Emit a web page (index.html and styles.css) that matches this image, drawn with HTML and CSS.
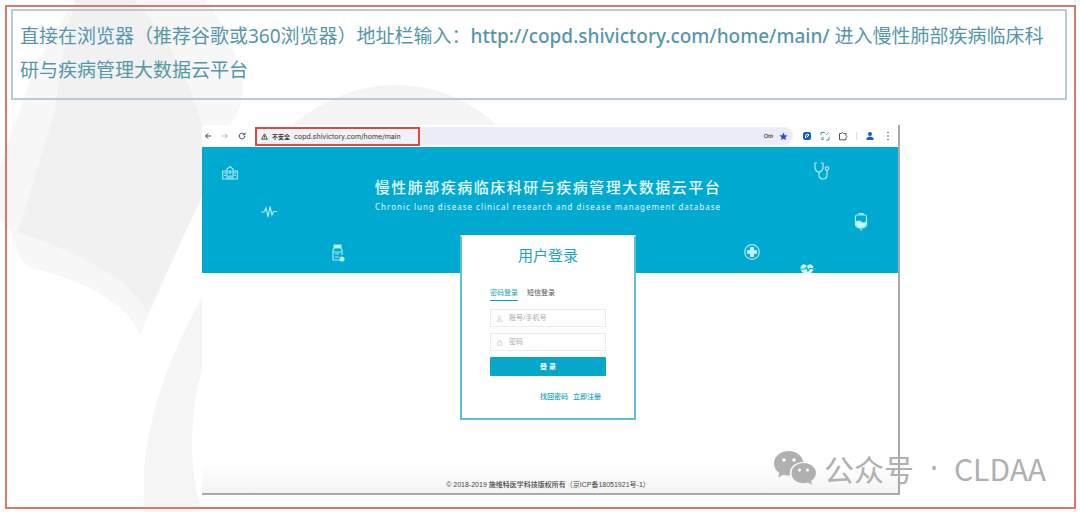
FILE: index.html
```html
<!DOCTYPE html>
<html lang="zh-CN">
<head>
<meta charset="utf-8">
<title>慢性肺部疾病临床科研与疾病管理大数据云平台</title>
<link rel="stylesheet" href="styles.css">
</head>
<body>
<svg class="backdrop" viewBox="0 0 1080 512" preserveAspectRatio="xMinYMin slice" aria-hidden="true">
  <path fill="#f7f7f7" d="M75 0H205Q236 40 243 85Q243 108 230 125L200 197L140 335Q130 308 88 287Q60 275 32 268Q14 258 14 235L0 220V165Q8 140 20 110Q34 60 75 0Z"/>
  <path fill="#f1f1f1" d="M75 0H135Q180 50 202 125V197L148 312Q135 290 112 275Q62 245 18 233Q40 160 55 110Q62 50 75 0Z"/>
  <path fill="#f4f4f4" d="M288 128Q340 85 395 85Q455 85 500 128V148H288Z"/>
  <path fill="#f5f5f5" d="M203 295Q150 390 144 470V512H201Q182 440 203 365Z"/>
</svg>
<main class="frame">
  <p class="notice">直接在浏览器（推荐谷歌或360浏览器）地址栏输入：<a href="#">http://copd.shivictory.com/home/main/</a> 进入慢性肺部疾病临床科研与疾病管理大数据云平台</p>

  <section class="window">
    <div class="toolbar">
      <button class="tool" aria-label="后退"><svg viewBox="0 0 8 8"><path d="M7 4H1.5M4 1.5L1.5 4L4 6.5" stroke="#444"/></svg></button>
      <button class="tool" aria-label="前进"><svg viewBox="0 0 8 8"><path d="M1 4H6.5M4 1.5L6.5 4L4 6.5" stroke="#bbb"/></svg></button>
      <button class="tool" aria-label="刷新"><svg viewBox="0 0 8 8"><path d="M6.8 4A2.8 2.8 0 1 1 5.8 1.9M7 .7V2.8H4.8" stroke="#444"/></svg></button>
      <div class="address">
        <div class="address-main">
          <svg class="warn" viewBox="0 0 8 8"><path d="M4 1L7.3 7H.7ZM4 3V5M4 5.5V6.2" stroke="#333"/></svg>
          <span class="insecure">不安全</span>
          <span class="url">copd.shivictory.com/home/main</span>
        </div>
        <svg class="key" viewBox="0 0 10 8"><circle cx="3" cy="4" r="1.8" stroke="#666"/><path d="M5 3.3H9.5V5H5M7.5 5V6" stroke="#666"/></svg>
        <svg class="star" viewBox="0 0 10 10"><path fill="#2450d8" d="M5 .6L6.3 3.5L9.5 3.8L7.1 5.9L7.8 9L5 7.4L2.2 9L2.9 5.9L.5 3.8L3.7 3.5Z"/></svg>
      </div>
      <div class="extensions">
        <svg viewBox="0 0 10 10"><rect x="1" y="1" width="8" height="8" rx="2" fill="#1b5fb4"/><path d="M3.5 7V4.5L6 3L7 4L4.5 6.5" stroke="#fff"/></svg>
        <svg viewBox="0 0 10 10"><path d="M1 4V1.500H5M9 6V9H6" stroke="#3c96b4"/><path d="M1 9L4 6M2 6V8.500H4M6 4L8.500 1.500" stroke="#7aa"/></svg>
        <svg viewBox="0 0 10 10"><path d="M1.500 2.500H3.500Q4.500 .5 5.500 2.500H8V4.500Q9.700 5.500 8 6.500V8.800H1.500Z" stroke="#555"/></svg>
        <span class="divider"></span>
        <svg viewBox="0 0 10 10"><circle cx="5" cy="3" r="2" fill="#2450d8"/><path d="M1.500 9V7Q5 3.800 8.500 7V9Z" fill="#2450d8"/></svg>
        <svg viewBox="0 0 10 10"><circle cx="5" cy="1.500" r=".8" fill="#555"/><circle cx="5" cy="5" r=".8" fill="#555"/><circle cx="5" cy="8.500" r=".8" fill="#555"/></svg>
      </div>
    </div>

    <header class="hero">
      <h1>慢性肺部疾病临床科研与疾病管理大数据云平台</h1>
      <p>Chronic lung disease clinical research and disease management database</p>
      <svg class="mark hospital" viewBox="0 0 16 16"><path d="M.7 6H5V14H.7ZM11 6H15.300V14H11ZM5 14V4L8 1.500L11 4V14ZM0 14H16M2 8H4M2 10.500H4M12 8H14M12 10.500H14M8 5V9M6 7H10M7 14V11H9V14"/></svg>
      <svg class="mark pulse" viewBox="0 0 16 16"><path d="M0 8H3L5 4L7 13L9 2.500L11 11L12.500 7.500H16"/></svg>
      <svg class="mark bottle" viewBox="0 0 16 18"><path fill="#c9f6fa" d="M4 1H11V4H4Z"/><path d="M4.500 4L3 6V16H10M10.500 4L12 6V11M3 8H11M5 10H9M5 13H9"/><circle cx="12" cy="15" r="2" fill="#c9f6fa"/></svg>
      <svg class="mark stethoscope" viewBox="0 0 16 18"><path d="M3 1H1V6Q2 10 5 10Q8 10 9 6V1H7M5 10V14Q6 17 9 17Q13 17 13 13V8"/><circle cx="13" cy="6.500" r="1.700"/></svg>
      <svg class="mark bag" viewBox="0 0 14 18"><path d="M5 2V.7H9V2M3 2H11Q12.500 2 12.500 4V11Q12.500 14 9 15H5Q1.500 14 1.500 11V4Q1.500 2 3 2ZM7 15V18"/><path fill="#c9f6fa" d="M2 9Q5 7 7 9Q9 11 12 9V12L9 14.500H5L2 12Z"/></svg>
      <svg class="mark cross" viewBox="0 0 16 16"><circle cx="8" cy="8" r="7.300"/><path fill="#c9f6fa" d="M6.500 3.500H9.500V6.500H12.500V9.500H9.500V12.500H6.500V9.500H3.500V6.500H6.500Z"/></svg>
      <svg class="mark heart" viewBox="0 0 14 9"><path fill="#c9f6fa" stroke="none" d="M7 2Q4-1 1.500 1.500Q-1 5 3 9H11Q15 5 12.500 1.500Q10-1 7 2Z"/><path stroke="#00a9cf" d="M1 5H5L6.500 3L8 7L9.500 4.500H13"/></svg>
    </header>

    <form class="card">
      <h2>用户登录</h2>
      <div class="tabs">
        <button type="button" class="tab active">密码登录</button>
        <button type="button" class="tab">短信登录</button>
      </div>
      <div class="field">
        <svg viewBox="0 0 8 8"><circle cx="4" cy="2.500" r="1.500"/><path d="M1 7Q4 2.500 7 7Z"/></svg>
        <input type="text" placeholder="账号/手机号" aria-label="账号/手机号">
      </div>
      <div class="field">
        <svg viewBox="0 0 8 8"><path d="M1.500 3.500H6.500V7H1.500ZM2.500 3.500V2Q4 0 5.500 2V3.500"/></svg>
        <input type="password" placeholder="密码" aria-label="密码">
      </div>
      <button type="submit" class="submit">登 录</button>
      <div class="links"><a href="#">找回密码</a><a href="#">立即注册</a></div>
    </form>

    <footer class="copyright"><b>© 2018-2019 施维特医学科技版权所有</b><span>（京ICP备18051921号-1）</span></footer>
  </section>
</main>

<div class="watermark">
  <svg viewBox="0 0 42 34" aria-hidden="true">
    <path fill="#b0b0b0" d="M15 0C6.500 0 0 5.500 0 12.500C0 16.500 2 19.800 5.500 22L4 26.500L9.500 23.800Q12.500 24.700 16 24.500C14.500 16.500 21 11 29.500 11C28 4.500 22 0 15 0Z"/>
    <path fill="#b0b0b0" d="M29.500 12C22.500 12 17.500 16.500 17.500 22C17.500 28 23 32.300 29.500 32.300Q32 32.300 34 31.500L38 34L37 30C40 28 42 25.300 42 22C42 16.500 36.500 12 29.500 12Z"/>
    <g fill="#fff"><circle cx="10" cy="9" r="1.800"/><circle cx="20" cy="9" r="1.800"/><circle cx="25.500" cy="19" r="1.500"/><circle cx="33.500" cy="19" r="1.500"/></g>
  </svg>
  <span>公众号</span>
  <span class="dot">·</span>
  <span>CLDAA</span>
</div>
</body>
</html>
```
FILE: styles.css
```css
* { box-sizing: border-box; }

body {
  margin: 0;
  padding: 5px 4px 3px 5px;
  min-height: 100vh;
  display: flex;
  position: relative;
  background: #fff;
  font-family: "Noto Sans", "Noto Sans CJK SC", sans-serif;
}

h1, h2, p { margin: 0; font-weight: 400; }
a { color: inherit; text-decoration: none; }
button { border: 0; padding: 0; background: none; font: inherit; color: inherit; }
svg { fill: none; display: block; flex: none; }

.backdrop {
  position: absolute;
  inset: 0;
  width: 100%;
  height: 100%;
}

.frame {
  position: relative;
  flex: 1;
  display: flex;
  flex-direction: column;
  border: 2px solid #d9796b;
  padding: 2px 7px 12px 4px;
}

.notice {
  border: 2px solid #b3cdd5;
  padding: 8px 16px 11px 7px;
  font-size: 19px;
  line-height: 34px;
  color: #5596a9;
}
.notice a { font-weight: 500; }

.window {
  flex: 1;
  display: flex;
  flex-direction: column;
  margin: 25px 167px 0 191px;
  background: linear-gradient(#fff 92%, #f4f4f4);
  border-right: 2px solid #a9a9a9;
  border-bottom: 2px solid #a9a9a9;
}

.toolbar {
  display: flex;
  align-items: center;
  gap: 9px;
  height: 22px;
  padding: 0 5px 0 2px;
  background: #fff;
}
.tool svg { width: 8px; height: 8px; }

.address {
  flex: 1;
  display: flex;
  align-items: center;
  gap: 6px;
  height: 18px;
  padding-right: 5px;
  border-radius: 9px;
  background: #ebecf7;
}
.address-main {
  display: flex;
  align-items: center;
  gap: 4px;
  width: 165px;
  height: 19px;
  padding: 0 4px;
  margin-right: auto;
  border: 2px solid #dc4a3c;
  background: #f1f1f8;
  font-family: Inter, "Noto Sans CJK SC", sans-serif;
  font-size: 7px;
  color: #333;
}
.warn { width: 7px; height: 7px; }
.insecure { font-size: 6px; font-weight: 700; }
.key { width: 10px; height: 8px; }
.star { width: 9px; height: 9px; }
.extensions { display: flex; align-items: center; gap: 8px; }
.extensions svg { width: 10px; height: 10px; }
.divider { width: 1px; height: 8px; background: #ddd; }

.hero {
  position: relative;
  height: 126px;
  padding: 28px 4px 0 0;
  background: #00a9cf;
  color: #e4fbff;
  text-align: center;
}
.hero h1 { font-size: 15px; line-height: 24px; letter-spacing: 0.1em; font-weight: 500; }
.hero p { font-size: 8px; line-height: 16px; letter-spacing: 1px; }

.mark { position: absolute; width: 16px; height: 16px; stroke: #a9eaf4; stroke-width: 1.2; }
.hospital { left: 20px; top: 18px; }
.pulse { left: 59px; top: 57px; }
.bottle { left: 128px; top: 97px; height: 18px; }
.stethoscope { right: 68px; top: 15px; height: 18px; }
.bag { right: 30px; top: 66px; width: 14px; height: 18px; }
.cross { right: 138px; top: 97px; }
.heart { right: 84px; bottom: 0; width: 14px; height: 9px; }

.card {
  position: relative;
  align-self: center;
  width: 176px;
  margin: -38px 4px 0 0;
  padding: 6px 28px 16px;
  border: 2px solid #5bbfd2;
  border-top-color: #fff;
  background: #fff;
  font-size: 7px;
  line-height: 10px;
}
.card h2 { font-size: 15px; line-height: 24px; text-align: center; color: #20a3c2; }

.tabs { display: flex; gap: 9px; margin: 21px 0 8px; }
.tab { padding-bottom: 2px; border-bottom: 1px solid transparent; line-height: 10px; color: #555; }
.tab.active { border-color: #159fbf; color: #159fbf; }

.field {
  display: flex;
  align-items: center;
  gap: 6px;
  height: 18px;
  margin-bottom: 6px;
  padding: 0 5px;
  border: 1px solid #ebebeb;
}
.field svg { width: 7px; height: 7px; stroke: #d5d5d5; }
.field input { flex: 1; min-width: 0; padding: 0; border: 0; outline: 0; background: none; font: inherit; }
.field input::placeholder { color: #aaa; }

.submit { display: block; width: 100%; height: 19px; border-radius: 1px; background: #06a7c8; color: #fff; font-weight: 700; }
.links { display: flex; justify-content: flex-end; gap: 5px; margin: 16px 5px 0 0; color: #159fbf; font-weight: 500; }

.copyright {
  margin-top: auto;
  padding: 0 4px 2px 0;
  display: flex;
  justify-content: center;
  font-family: "Liberation Sans", "Noto Sans CJK SC", sans-serif;
  font-size: 7px;
  line-height: 12px;
  color: #444;
}
.copyright b { font-weight: 500; }

.watermark {
  position: absolute;
  right: 34px;
  bottom: 22px;
  display: flex;
  align-items: center;
  gap: 16px;
  font-family: "Noto Sans CJK SC", sans-serif;
  font-size: 30px;
  line-height: 44px;
  color: #b0b0b0;
}
.watermark svg { width: 42px; height: 34px; margin-right: -8px; }
.dot { font-family: "Noto Sans", sans-serif; }
```
